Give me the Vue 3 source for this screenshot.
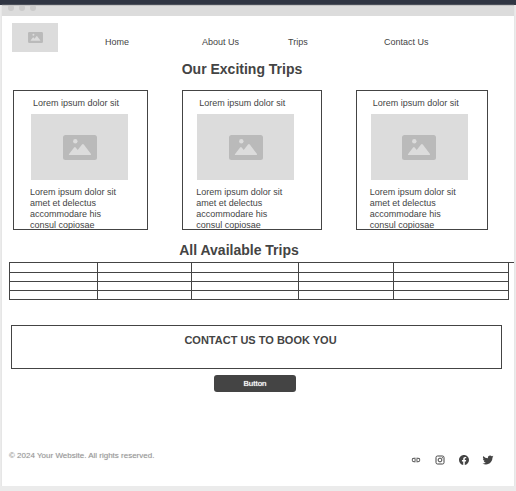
<script setup>
const links = ['Home', 'About Us', 'Trips', 'Contact Us']

const trips = [
  { id: 1, inset: true },
  { id: 2, inset: false },
  { id: 3, inset: false },
]

const rows = 4
const columns = 5
</script>

<template>
  <div class="screen">
    <div class="top-strip"></div>
    <div class="window">
      <div class="chrome">
        <span class="dot"></span>
        <span class="dot"></span>
        <span class="dot"></span>
      </div>

      <header class="header">
        <div class="logo">
          <svg class="logo-icon" viewBox="0 0 34 25" aria-hidden="true">
            <rect width="34" height="25" rx="3" fill="#bababa" />
            <circle cx="12.3" cy="6.3" r="2.2" fill="#dcdcdc" />
            <path d="M6.3 20q-.9 0-.2-1.1l5-6.4q.8-1 1.6 0l2 2.6 4.3-5.6q.9-1.1 1.8 0l7 9.2q.8 1.3-.3 1.3z" fill="#dcdcdc" />
          </svg>
        </div>
        <nav class="nav">
          <a v-for="link in links" :key="link" href="#" class="nav-link">{{ link }}</a>
        </nav>
      </header>

      <main>
        <h2 class="heading">Our Exciting Trips</h2>
        <section class="cards">
          <article v-for="trip in trips" :key="trip.id" class="card" :class="{ 'card-inset': trip.inset }">
            <h3 class="card-title">Lorem ipsum dolor sit</h3>
            <div class="photo">
              <svg class="photo-icon" viewBox="0 0 34 25" aria-hidden="true">
                <rect width="34" height="25" rx="2.5" fill="#bababa" />
                <circle cx="12.3" cy="6.3" r="2.2" fill="#dcdcdc" />
                <path d="M6.3 20q-.9 0-.2-1.1l5-6.4q.8-1 1.6 0l2 2.6 4.3-5.6q.9-1.1 1.8 0l7 9.2q.8 1.3-.3 1.3z" fill="#dcdcdc" />
              </svg>
            </div>
            <p class="card-text">Lorem ipsum dolor sit amet et delectus accommodare his consul copiosae</p>
          </article>
        </section>

        <h2 class="heading heading-table">All Available Trips</h2>
        <div class="table-area">
          <table class="trips-table" aria-label="All Available Trips">
            <colgroup>
              <col class="col-a" />
              <col class="col-b" />
              <col class="col-c" />
              <col class="col-d" />
              <col class="col-e" />
            </colgroup>
            <tbody>
              <tr v-for="r in rows" :key="r">
                <td v-for="c in columns" :key="c"></td>
              </tr>
            </tbody>
          </table>
        </div>

        <section class="contact">
          <div class="contact-box">
            <h3 class="contact-title">CONTACT US TO BOOK YOU</h3>
          </div>
        </section>
        <div class="actions">
          <button type="button" class="button">Button</button>
        </div>
      </main>

      <footer class="footer">
        <p class="copyright">© 2024 Your Website. All rights reserved.</p>
        <div class="social">
          <a href="#" class="social-link" aria-label="Link">
            <svg viewBox="-2 -2 28 28" fill="#444">
              <path d="M3.9 12c0-1.7 1.4-3.1 3.1-3.1h4V7H7a5 5 0 0 0 0 10h4v-1.9H7A3.1 3.1 0 0 1 3.9 12zM8 13h8v-2H8zm9-6h-4v1.9h4a3.1 3.1 0 0 1 0 6.2h-4V17h4a5 5 0 0 0 0-10z" />
            </svg>
          </a>
          <a href="#" class="social-link" aria-label="Instagram">
            <svg viewBox="0 0 24 24" fill="none" stroke="#444" stroke-width="2">
              <rect x="4" y="4" width="16" height="16" rx="3" />
              <circle cx="12" cy="12" r="3.8" />
              <circle cx="16.7" cy="7.3" r="1.1" fill="#444" stroke="none" />
            </svg>
          </a>
          <a href="#" class="social-link" aria-label="Facebook">
            <svg viewBox="0 0 24 24" fill="#444">
              <path d="M22 12.06C22 6.5 17.52 2 12 2S2 6.5 2 12.06c0 5.02 3.66 9.18 8.44 9.94v-7.03H7.9v-2.91h2.54V9.85c0-2.52 1.49-3.91 3.78-3.91 1.09 0 2.24.2 2.24.2v2.47H15.2c-1.24 0-1.63.78-1.63 1.57v1.88h2.78l-.45 2.91h-2.33V22C18.34 21.24 22 17.08 22 12.06z" />
            </svg>
          </a>
          <a href="#" class="social-link" aria-label="Twitter">
            <svg viewBox="0 0 24 24" fill="#444">
              <path d="M23 5.1c-.8.4-1.7.6-2.6.7.9-.6 1.6-1.4 2-2.5-.9.5-1.8.9-2.9 1.1a4.5 4.5 0 0 0-7.7 4.1A12.8 12.8 0 0 1 2.5 3.8a4.5 4.5 0 0 0 1.4 6c-.7 0-1.4-.2-2-.6v.1a4.5 4.5 0 0 0 3.6 4.4c-.6.2-1.3.2-2 .1a4.5 4.5 0 0 0 4.2 3.1A9.1 9.1 0 0 1 1 18.8a12.8 12.8 0 0 0 6.9 2c8.3 0 12.9-6.9 12.9-12.9v-.6c.8-.6 1.6-1.3 2.2-2.2z" />
            </svg>
          </a>
        </div>
      </footer>
    </div>
  </div>
</template>

<style>
body {
  background: #ebebeb;
}
</style>

<style scoped>
.screen {
  font-family: "Liberation Sans", Arial, sans-serif;
  font-size: 9px;
  line-height: 11px;
  color: #444;
}

h2,
h3,
p {
  margin: 0;
}

.top-strip {
  height: 5px;
  background: #2f3542;
}

.window {
  margin: 0 2px;
  background: #fff;
  box-shadow: 0 0 1px #ccc;
}

.chrome {
  display: flex;
  gap: 5px;
  height: 11px;
  padding-left: 6px;
  background: #dcdcdc;
  border-top: 1px solid #c4c4c4;
  box-sizing: border-box;
}

.dot {
  width: 6px;
  height: 5px;
  border-radius: 1px 1px 3px 3px;
  background: #cbcbcb;
}

.header {
  display: flex;
  gap: 47px;
  padding: 7px 0 0 10px;
}

.logo {
  display: flex;
  flex: none;
  align-items: center;
  justify-content: center;
  width: 46px;
  height: 29px;
  background: #dcdcdc;
}

.logo-icon {
  width: 15px;
  height: 11px;
}

.nav {
  display: grid;
  flex: 1;
  grid-template-columns: 97fr 86fr 96fr 130fr;
  padding-top: 14px;
}

.nav-link {
  color: inherit;
  text-decoration: none;
}

.heading {
  margin-top: 9px;
  padding-right: 32px;
  font-size: 14px;
  line-height: 16px;
  text-align: center;
}

.heading-table {
  margin-top: 12px;
  padding-right: 38px;
}

.cards {
  display: grid;
  grid-template-columns: 135fr 139fr 132fr;
  column-gap: 34px;
  margin: 13px 26px 0 11px;
}

.card {
  box-sizing: border-box;
  height: 140px;
  padding: 7px 13px 0;
  border: 1px solid #444;
}

.card-inset {
  padding-left: 16px;
}

.card-title {
  padding-left: 3px;
  font-size: 9px;
  font-weight: 400;
}

.photo {
  display: flex;
  align-items: center;
  justify-content: center;
  width: 97px;
  max-width: 100%;
  height: 66px;
  margin: 5px 0 7px 1px;
  background: #dcdcdc;
}

.photo-icon {
  width: 34px;
  height: 25px;
}

.card-text {
  max-width: 98px;
}

.table-area {
  margin: 4px 0 0 7px;
  padding-right: 5px;
  border-top: 1px solid #444;
}

.trips-table {
  width: 100%;
  table-layout: fixed;
  border-collapse: separate;
  border-spacing: 0;
  border-left: 1px solid #444;
}

.trips-table td {
  box-sizing: border-box;
  height: 9px;
  padding: 0;
  border-right: 1px solid #444;
  border-bottom: 1px solid #444;
}

.trips-table tr:first-child td {
  height: 10px;
}

.col-a {
  width: 17.6%;
}

.col-b {
  width: 18.8%;
}

.col-c {
  width: 21.6%;
}

.col-d {
  width: 19%;
}

.col-e {
  width: 23%;
}

.contact {
  margin: 25px 12px 0 9px;
}

.contact-box {
  padding: 7px 0 21px 8px;
  border: 1px solid #444;
}

.contact-title {
  font-size: 11px;
  line-height: 14px;
  text-align: center;
}

.actions {
  display: flex;
  justify-content: center;
  padding: 6px 6px 0 0;
}

.button {
  width: 82px;
  height: 17px;
  padding: 0;
  border: 0;
  border-radius: 3px;
  background: #444;
  color: #fff;
  font: 8px/17px "Liberation Sans", Arial, sans-serif;
  text-shadow: 0 0 1px #fff;
}

.footer {
  display: flex;
  align-items: flex-start;
  justify-content: space-between;
  margin-top: 58px;
  padding: 0 20px 20px 7px;
}

.copyright {
  padding-top: 1px;
  font-size: 8px;
  line-height: 10px;
  color: #999;
  text-shadow: 0 0 1px #ccc;
}

.social {
  display: flex;
  gap: 12px;
  padding-top: 4px;
}

.social-link {
  display: block;
  width: 12px;
  height: 12px;
}

.social-link svg {
  display: block;
  width: 100%;
  height: 100%;
}
</style>
